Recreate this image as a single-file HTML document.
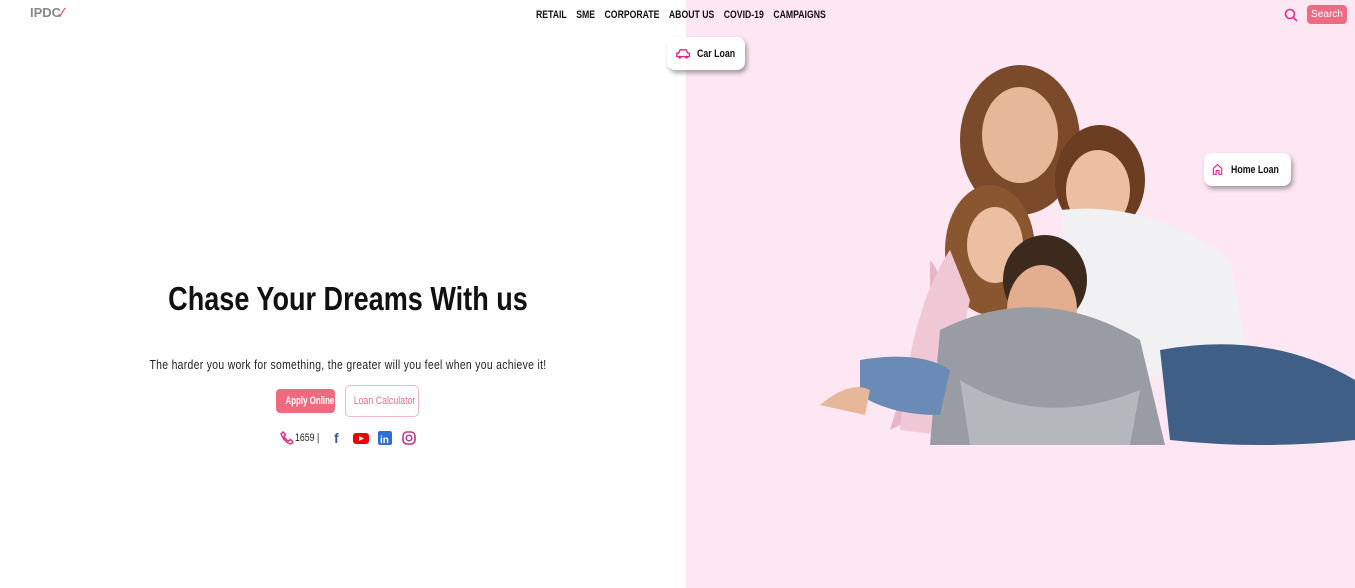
<!DOCTYPE html>
<html><head><style>
body{margin:0;width:1355px;height:588px;overflow:hidden;background:#fff;font-family:"Liberation Sans",sans-serif;position:relative}
.pink{position:absolute;left:686px;top:0;width:669px;height:588px;background:#fde7f3}
.nav{position:absolute;top:9px;left:536px;font-size:11px;font-weight:bold;color:#111;white-space:nowrap;transform:scaleX(.79);transform-origin:0 0}
.nav span{margin-right:12px}
.logo{position:absolute;left:30px;top:5px;font-weight:bold;color:#888;font-size:13px}
.srch{position:absolute;left:1307px;top:5px;width:40px;height:19px;background:#ee6b86;border-radius:4px;color:#fff;font-size:10px;text-align:center;line-height:19px}
.card{position:absolute;background:#fff;border-radius:8px;box-shadow:2px 3px 5px rgba(0,0,0,.35);font-size:11px;font-weight:bold;color:#111;display:flex;align-items:center;white-space:nowrap}
.c{display:inline-block;transform:scaleX(.8);transform-origin:0 50%}
h1{position:absolute;top:280px;left:0;width:696px;text-align:center;margin:0;font-size:33px;font-weight:bold;color:#111;transform:scaleX(.82)}
.sub{position:absolute;top:357px;left:0;width:696px;text-align:center;font-size:13px;color:#222;letter-spacing:.4px;transform:scaleX(.8);white-space:nowrap}
.btn1{position:absolute;left:276px;top:389px;width:59px;height:24px;background:#ee6b7f;border-radius:4px;color:#fff;font-size:11px;line-height:24px;text-align:center;font-weight:bold;white-space:nowrap}
.btn2{position:absolute;left:345px;top:385px;width:72px;height:30px;border:1px solid #f0b4c2;border-radius:5px;color:#e0708a;font-size:11px;line-height:30px;text-align:center;white-space:nowrap}
.btn1 span{display:inline-block;transform:scaleX(.72)}
.btn2 span{display:inline-block;transform:scaleX(.8)}
</style></head><body>
<div class="pink"></div>
<div class="logo">IPDC<span style="color:#e83e8c">⁄</span></div>
<div class="nav"><span>RETAIL</span><span>SME</span><span>CORPORATE</span><span>ABOUT US</span><span>COVID-19</span><span>CAMPAIGNS</span></div>
<svg style="position:absolute;left:1284px;top:8px" width="14" height="14"><circle cx="6" cy="6" r="4.5" fill="none" stroke="#d63384" stroke-width="1.6"/><line x1="9.5" y1="9.5" x2="13" y2="13" stroke="#d63384" stroke-width="1.6"/></svg>
<div class="srch">Search</div>
<div class="card" style="left:667px;top:37px;width:78px;height:33px"><svg style="margin:0 7px 0 9px" width="17" height="12" viewBox="0 0 17 12"><path d="M3 5 L5 1 H12 L14 5 H16 V9 H1 V5Z" fill="none" stroke="#e0218a" stroke-width="1.6"/><circle cx="4.5" cy="10" r="1.6" fill="#e0218a"/><circle cx="12.5" cy="10" r="1.6" fill="#e0218a"/></svg><span class="c">Car Loan</span></div>
<div class="card" style="left:1204px;top:153px;width:87px;height:33px"><svg style="margin:0 8px 0 8px" width="16" height="17" viewBox="0 0 16 17"><path d="M2 7 L8 1.5 L14 7 V15.5 H10 V10 H6 V15.5 H2Z" fill="none" stroke="#e0218a" stroke-width="1.6"/></svg><span class="c">Home Loan</span></div>
<svg style="position:absolute;left:810px;top:50px" width="545" height="400" viewBox="0 0 545 400">
<ellipse cx="210" cy="90" rx="60" ry="75" fill="#7a4a2a"/>
<ellipse cx="210" cy="85" rx="38" ry="48" fill="#e7b79a"/>
<ellipse cx="290" cy="130" rx="45" ry="55" fill="#6b3e22"/>
<ellipse cx="288" cy="140" rx="32" ry="40" fill="#ecbfa2"/>
<path d="M250 160 Q340 150 420 210 L440 320 L270 330Z" fill="#f1f1f3"/>
<ellipse cx="180" cy="200" rx="45" ry="65" fill="#8a5630"/>
<ellipse cx="185" cy="195" rx="28" ry="38" fill="#ecbfa2"/>
<path d="M120 210 Q150 240 100 370 L80 380 L120 250Z" fill="#e9b3c8"/>
<path d="M140 200 Q100 260 90 380 L130 385 L160 250Z" fill="#f0c8d5"/>
<ellipse cx="235" cy="230" rx="42" ry="45" fill="#3d2a1e"/>
<ellipse cx="232" cy="260" rx="35" ry="45" fill="#e3ad90"/>
<path d="M130 280 Q230 230 330 290 L355 395 H120Z" fill="#9a9ca3"/>
<path d="M150 330 Q230 380 330 340 L320 395 H160Z" fill="#b5b7bd"/>
<path d="M350 300 Q460 280 545 330 V390 Q450 400 360 390Z" fill="#3f5f86"/>
<path d="M50 310 Q110 300 140 320 L130 365 Q80 365 50 345Z" fill="#6a8bb5"/>
<path d="M10 355 Q40 330 60 340 L55 365 Z" fill="#e7b79a"/>
</svg>
<h1>Chase Your Dreams With us</h1>
<div class="sub">The harder you work for something, the greater will you feel when you achieve it!</div>
<div class="btn1"><span>Apply Online</span></div>
<div class="btn2"><span>Loan Calculator</span></div>
<div style="position:absolute;left:280px;top:430px;font-size:11px;color:#222;display:flex;align-items:center;white-space:nowrap">
<svg width="14" height="14" viewBox="0 0 14 14"><path d="M3 1 L5.5 3.5 L4 5.5 Q6 9 8.5 10 L10.5 8.5 L13 11 L11 13 Q5 12 1 3Z" fill="none" stroke="#d63384" stroke-width="1.5"/></svg>
<span style="margin-left:1px;display:inline-block;width:28px"><span class="c">1659 |</span></span>
<span style="margin-left:11px;color:#3b5998;font-weight:bold;font-size:14px">f</span>
<svg style="margin-left:14px" width="16" height="11"><rect width="16" height="11" rx="3" fill="#e00"/><path d="M6 3 L11 5.5 L6 8Z" fill="#fff"/></svg>
<svg style="margin-left:9px" width="14" height="14"><rect width="14" height="14" rx="2" fill="#2f6fcf"/><text x="2" y="12" font-size="10" font-weight="bold" fill="#fff" font-family="Liberation Sans">in</text></svg>
<svg style="margin-left:10px" width="14" height="14"><rect x="1" y="1" width="12" height="12" rx="4" fill="none" stroke="#c13584" stroke-width="1.6"/><circle cx="7" cy="7" r="2.8" fill="none" stroke="#c13584" stroke-width="1.5"/></svg>
</div>
</body></html>
